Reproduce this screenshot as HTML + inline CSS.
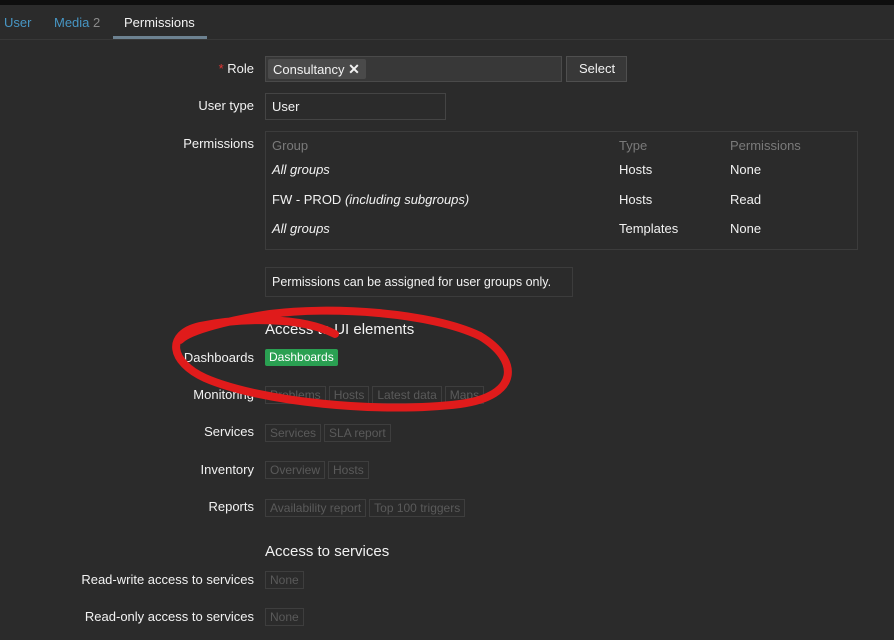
<!DOCTYPE html>
<html><head><style>
body{margin:0;width:894px;height:640px;background:#2b2b2b;font-family:"Liberation Sans",sans-serif;font-size:13px;color:#f2f2f2;position:relative;overflow:hidden}
.a{position:absolute;white-space:nowrap}
.top{position:absolute;left:0;top:0;width:894px;height:5px;background:#0e0e0e}
.tabs{position:absolute;left:0;top:5px;width:894px;height:34px;border-bottom:1px solid #383838}
.lbl{position:absolute;right:640px;text-align:right;white-space:nowrap}
.box{position:absolute;border:1px solid #4a4a4a;background:#2b2b2b;box-sizing:border-box}
.tag{display:inline-block;border:1px solid #3e3e3e;color:#5a5a5a;font-size:12px;padding:1px 4px;margin-right:3px;line-height:14px}
</style></head><body>
<div class="top"></div>
<div class="tabs"></div>
<div class="a" style="left:4px;top:15px;color:#4796c4">User</div>
<div class="a" style="left:54px;top:15px;color:#4796c4">Media <span style="color:#8a8a8a">2</span></div>
<div class="a" style="left:124px;top:15px;color:#f2f2f2">Permissions</div>
<div class="a" style="left:113px;top:36px;width:94px;height:3px;background:#6d8291"></div>

<div class="lbl" style="top:61px"><span style="color:#e33734">*</span> Role</div>
<div class="box" style="left:265px;top:56px;width:297px;height:26px;background:#383838"></div>
<div class="a" style="left:268px;top:59px;height:20px;width:98px;background:#4a4a4a;border-radius:2px"></div>
<div class="a" style="left:273px;top:61px">Consultancy <b style="font-size:14px">✕</b></div>
<div class="box" style="left:566px;top:56px;width:61px;height:26px;background:#383838;border-color:#4f4f4f"></div>
<div class="a" style="left:579px;top:61px">Select</div>

<div class="lbl" style="top:98px">User type</div>
<div class="box" style="left:265px;top:93px;width:181px;height:27px;border-color:#444"></div>
<div class="a" style="left:272px;top:99px">User</div>

<div class="lbl" style="top:136px">Permissions</div>
<div class="box" style="left:265px;top:131px;width:593px;height:119px;border-color:#3c3c3c"></div>
<div class="a" style="left:272px;top:138px;color:#7a7a7a">Group</div>
<div class="a" style="left:619px;top:138px;color:#7a7a7a">Type</div>
<div class="a" style="left:730px;top:138px;color:#7a7a7a">Permissions</div>
<div class="a" style="left:272px;top:162px;font-style:italic">All groups</div>
<div class="a" style="left:619px;top:162px">Hosts</div>
<div class="a" style="left:730px;top:162px">None</div>
<div class="a" style="left:272px;top:192px">FW - PROD <i>(including subgroups)</i></div>
<div class="a" style="left:619px;top:192px">Hosts</div>
<div class="a" style="left:730px;top:192px">Read</div>
<div class="a" style="left:272px;top:221px;font-style:italic">All groups</div>
<div class="a" style="left:619px;top:221px">Templates</div>
<div class="a" style="left:730px;top:221px">None</div>

<div class="box" style="left:265px;top:267px;width:308px;height:30px;border-color:#3c3c3c"></div>
<div class="a" style="left:272px;top:275px;font-size:12.5px">Permissions can be assigned for user groups only.</div>

<div class="a" style="left:265px;top:321px;font-size:15px">Access to UI elements</div>
<div class="lbl" style="top:350px">Dashboards</div>
<div class="a" style="left:265px;top:349px;background:#2aa052;color:#fff;font-size:12px;padding:1px 4px;line-height:15px;border-radius:2px">Dashboards</div>
<div class="lbl" style="top:387px">Monitoring</div>
<div class="a" style="left:265px;top:386px"><span class="tag">Problems</span><span class="tag">Hosts</span><span class="tag">Latest data</span><span class="tag">Maps</span></div>
<div class="lbl" style="top:424px">Services</div>
<div class="a" style="left:265px;top:424px"><span class="tag">Services</span><span class="tag">SLA report</span></div>
<div class="lbl" style="top:462px">Inventory</div>
<div class="a" style="left:265px;top:461px"><span class="tag">Overview</span><span class="tag">Hosts</span></div>
<div class="lbl" style="top:499px">Reports</div>
<div class="a" style="left:265px;top:499px"><span class="tag">Availability report</span><span class="tag">Top 100 triggers</span></div>

<div class="a" style="left:265px;top:543px;font-size:15px">Access to services</div>
<div class="lbl" style="top:572px">Read-write access to services</div>
<div class="a" style="left:265px;top:571px"><span class="tag">None</span></div>
<div class="lbl" style="top:609px">Read-only access to services</div>
<div class="a" style="left:265px;top:608px"><span class="tag">None</span></div>

<svg class="a" style="left:0;top:0" width="894" height="640">
<path d="M335,334 C300,316 240,318 200,326 C165,334 170,362 205,378 C260,402 380,414 460,404 C520,396 520,360 480,336 C430,312 330,306 270,314 C230,320 190,330 180,340" fill="none" stroke="#e01b1b" stroke-width="8" stroke-linecap="round"/>
</svg>
</body></html>
